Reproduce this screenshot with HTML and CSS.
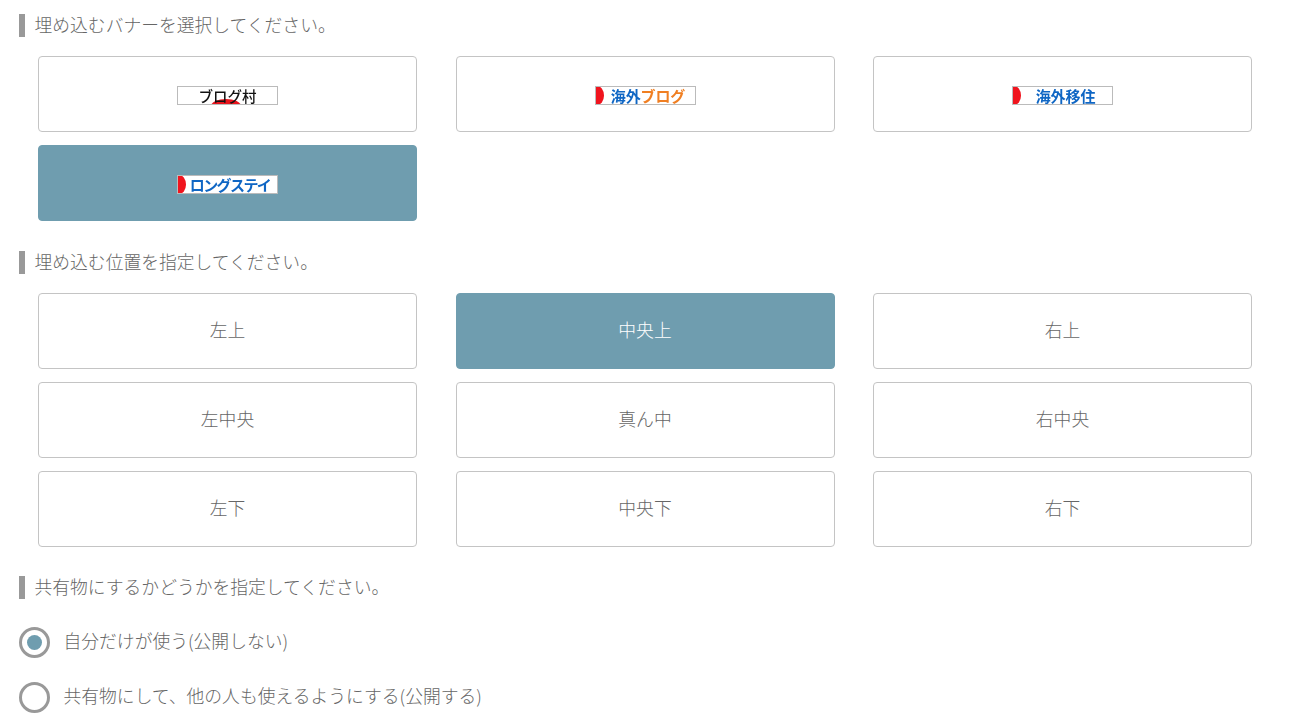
FILE: index.html
```html
<!DOCTYPE html>
<html lang="ja">
<head>
<meta charset="utf-8">
<title>バナー</title>
<link rel="stylesheet" href="styles.css">
</head>
<body>
<main class="page">
  <h2 class="heading">埋め込むバナーを選択してください。</h2>
  <div class="options options-banner">
    <button class="option"><span class="banner banner-village"><span class="sun"></span><span class="banner-text">ブログ村</span></span></button>
    <button class="option"><span class="banner"><span class="mark"></span><span class="banner-text blue">海外<span class="orange">ブログ</span></span></span></button>
    <button class="option"><span class="banner"><span class="mark"></span><span class="banner-text blue">海外移住</span></span></button>
    <button class="option selected"><span class="banner"><span class="mark"></span><span class="banner-text blue tight">ロングステイ</span></span></button>
  </div>
  <h2 class="heading">埋め込む位置を指定してください。</h2>
  <div class="options options-position">
    <button class="option">左上</button>
    <button class="option selected">中央上</button>
    <button class="option">右上</button>
    <button class="option">左中央</button>
    <button class="option">真ん中</button>
    <button class="option">右中央</button>
    <button class="option">左下</button>
    <button class="option">中央下</button>
    <button class="option">右下</button>
  </div>
  <h2 class="heading">共有物にするかどうかを指定してください。</h2>
  <div class="radios">
    <label class="radio-row"><span class="radio checked"></span><span class="radio-label">自分だけが使う(公開しない)</span></label>
    <label class="radio-row"><span class="radio"></span><span class="radio-label">共有物にして、他の人も使えるようにする(公開する)</span></label>
  </div>
</main>
</body>
</html>
```
FILE: styles.css
```css
* { box-sizing: border-box; }
html, body { margin: 0; background: #fff; }
body {
  font-family: "Noto Sans CJK JP", "Noto Sans", sans-serif;
  font-weight: 300;
  color: #666;
  font-size: 17.8px;
  overflow: hidden;
  height: 728px;
}
.page { padding: 14px 51px 0 19px; }
.heading {
  margin: 0;
  height: 23px;
  line-height: 20px;
  font-size: 17.8px;
  font-weight: 300;
  padding-left: 9.5px;
  border-left: 6px solid #999;
  white-space: nowrap;
}
.options {
  display: grid;
  grid-template-columns: repeat(3, 1fr);
  column-gap: 38.5px;
  row-gap: 13px;
  margin: 19px 0 0 19px;
}
.options-banner { margin-bottom: 30px; }
.options-position { margin-bottom: 29px; }
.option {
  height: 76px;
  padding: 0 0 4px;
  border: 1px solid #c4c4c4;
  border-radius: 4px;
  background: #fff;
  color: #666;
  font: inherit;
  display: flex;
  align-items: center;
  justify-content: center;
}
.options-banner .option { padding: 2px 0 0; }
.option.selected {
  background: #6f9daf;
  border-color: #6f9daf;
  color: #fff;
}
.banner {
  position: relative;
  display: flex;
  align-items: center;
  justify-content: center;
  width: 101px;
  height: 19px;
  background: #fff;
  border: 1px solid #bbb;
  overflow: hidden;
  filter: blur(.35px);
}
.mark {
  position: absolute;
  left: -6px;
  top: -1px;
  width: 14px;
  height: 19px;
  border-radius: 50%;
  background: #f0141e;
}
.sun {
  position: absolute;
  left: 33px;
  top: 12px;
  width: 30px;
  height: 14px;
  border-radius: 50%;
  background: #e8141c;
}
.banner-text {
  position: relative;
  font-size: 14.5px;
  font-weight: 500;
  line-height: 17px;
  color: #111;
  white-space: nowrap;
}
.banner-text.blue {
  color: #0f66c4;
  font-size: 15px;
  font-weight: 700;
  padding-left: 6px;
  letter-spacing: -.1px;
}
.banner-text.tight { letter-spacing: -1.6px; padding-left: 5px; }
.orange { color: #f07f22; }
.radios {
  display: flex;
  flex-direction: column;
  gap: 25px;
  margin-top: 28px;
}
.radio-row {
  display: flex;
  align-items: center;
  gap: 13.5px;
  height: 30px;
  white-space: nowrap;
}
.radio-label { padding-bottom: 4px; }
.radio {
  position: relative;
  flex: none;
  width: 31px;
  height: 31px;
  border: 3px solid #999;
  border-radius: 50%;
  background: #fff;
}
.radio.checked::after {
  content: "";
  position: absolute;
  inset: 5px;
  border-radius: 50%;
  background: #6f9daf;
}
```
